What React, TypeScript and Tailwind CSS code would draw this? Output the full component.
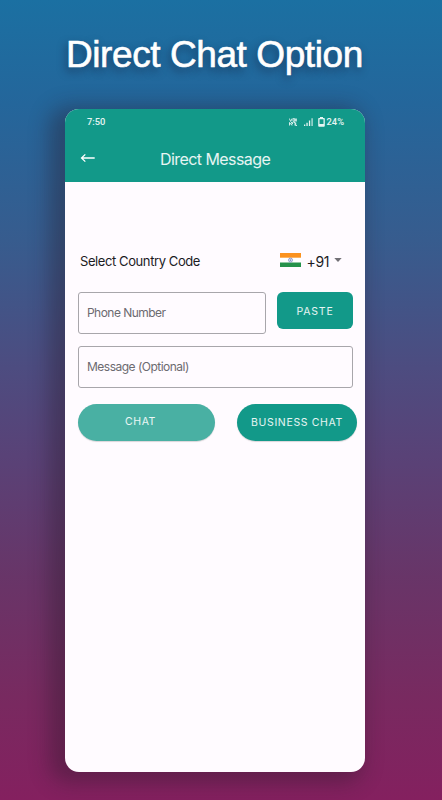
import { ReactNode } from "react";

const TEAL = "bg-[#129989]";

function StatusBar() {
  return (
    <div className="flex h-[26px] items-center justify-between pl-[22px] pr-[21px] font-['Roboto',sans-serif] text-[9.3px] font-medium text-white/90">
      <span>7:50</span>
      <div className="flex items-center">
        {/* VoLTE mark */}
        <svg width="8" height="8" viewBox="0 0 8 8" fill="none" stroke="currentColor" strokeWidth="0.9" className="mr-[7px]">
          <path d="M0.3 0.5 1.7 3.5 3.1 0.5M4 0.7H5.7V3.3H4zM6.3 0.5 7.7 3.5M7.7 0.5 6.3 3.5M0.5 4.5V7.5M0.5 4.5 3 7.5M2 4.5H3.5V6H2M4.5 4.5H6V7.5M6.7 4.5V7.5H8" />
        </svg>
        <svg width="9" height="8" viewBox="0 0 9 8" fill="currentColor" className="mr-[5px]">
          <path d="M0 6.5h1.3V8H0zM2.4 4.8h1.3V8H2.4zM4.9 2.5h1.3V8H4.9z" />
          <path d="M7.4 0.2h1.4V8H7.4z" opacity="0.75" />
        </svg>
        <svg width="7" height="10" viewBox="0 0 7 10" fill="currentColor" className="mr-[2px]">
          <path fillRule="evenodd" d="M2 0h3v1h1a.8.8 0 0 1 .8.8v7a.9.9 0 0 1-.9.9H1.1a.9.9 0 0 1-.9-.9v-7A.8.8 0 0 1 1 1h1zM1.5 2.3V7h4V2.3z" />
        </svg>
        <span>24%</span>
      </div>
    </div>
  );
}

function AppBar() {
  return (
    <div className="flex h-[46px] items-center">
      <svg width="16" height="12" viewBox="0 0 16 12" fill="none" stroke="#fff" strokeWidth="1.3" className="mb-px ml-[15px]">
        <path d="M14.7 6H1.5M5.3 2.4 1.5 6l3.8 3.6" />
      </svg>
      <h1 className="ml-16 mt-px text-[16px] tracking-[-0.57px] text-white/90">Direct Message</h1>
    </div>
  );
}

function IndiaFlag() {
  return (
    <svg width="21" height="14" viewBox="0 0 21 14" className="mb-[2px]">
      <path fill="#fff" d="M0 0h21v14H0z" />
      <path fill="#fb921f" d="M0 0h21v4.7H0z" />
      <path fill="#25924b" d="M0 9.5h21V14H0z" />
      <circle cx="10.5" cy="7.1" r="2" fill="#dfe3f4" stroke="#7f8fc6" strokeWidth="0.8" />
      <circle cx="10.5" cy="7.1" r="0.7" fill="#5668ac" />
    </svg>
  );
}

function Field({ children, className }: { children: ReactNode; className: string }) {
  return (
    <div className={`flex h-[42px] items-center rounded-[3px] border border-[#a8a6ab] pl-2 text-[12px] text-[#6c6a70] ${className}`}>
      {children}
    </div>
  );
}

export default function App() {
  return (
    <main className="flex h-[800px] w-[442px] flex-col overflow-hidden bg-[linear-gradient(to_bottom,#1b70a2_0%,#24669b_13%,#375c8e_30%,#4d4c80_46%,#594277_57%,#683568_72%,#782a60_87%,#84205f_100%)] font-['Inter',sans-serif]">
      <h2 className="ml-[66px] mt-[34px] h-[42px] whitespace-nowrap font-['Liberation_Sans',Arial,sans-serif] text-[37px] leading-[42px] tracking-[-0.42px] text-white [-webkit-text-stroke:0.6px_white] [text-shadow:-2px_4px_8px_rgba(20,30,60,0.6)]">
        Direct Chat Option
      </h2>

      <section className="ml-[65px] mt-[33px] h-[663px] w-[300px] shrink-0 overflow-hidden rounded-[14px] bg-[#fffbff] shadow-[-9px_4px_20px_7px_rgba(40,25,40,0.36)]">
        <header className={`h-[73px] ${TEAL}`}>
          <StatusBar />
          <AppBar />
        </header>

        <div className="mt-[68px] flex h-[22px] items-center pl-[15px] text-[#1c1b1f]">
          <span className="mt-px text-[13px] tracking-[-0.41px]">Select Country Code</span>
          <div className="ml-auto mr-[23px] flex items-center">
            <IndiaFlag />
            <span className="ml-[6px] text-[14px] tracking-[-0.4px]">+91</span>
            <svg width="8" height="4" viewBox="0 0 8 4" className="mb-[2px] ml-[5px]">
              <path d="M0.3 0h7.4L4 4z" fill="#727075" />
            </svg>
          </div>
        </div>

        <div className="mt-5 flex pl-[13px]">
          <Field className="w-[188px]">
            <span className="tracking-[-0.54px]">Phone Number</span>
          </Field>
          <button className={`ml-[11px] h-[37px] w-[76px] rounded-[6px] pt-[2px] text-[10.5px] tracking-[0.8px] text-white/90 ${TEAL}`}>
            PASTE
          </button>
        </div>

        <Field className="ml-[13px] mt-3 w-[275px]">
          <span className="tracking-[-0.51px]">Message (Optional)</span>
        </Field>

        <div className="mt-4 flex pl-[13px]">
          <button className="h-[37px] w-[137px] rounded-full bg-[#49b0a3] pb-px pr-3 text-[10.5px] tracking-[0.6px] text-white/90 shadow-[0_1px_1px_rgba(0,0,0,0.15)]">
            CHAT
          </button>
          <button className={`ml-[22px] h-[37px] w-[120px] whitespace-nowrap rounded-full pt-px text-[10.5px] tracking-[0.65px] text-white/90 shadow-[0_1px_1px_rgba(0,0,0,0.15)] ${TEAL}`}>
            BUSINESS CHAT
          </button>
        </div>
      </section>
    </main>
  );
}
